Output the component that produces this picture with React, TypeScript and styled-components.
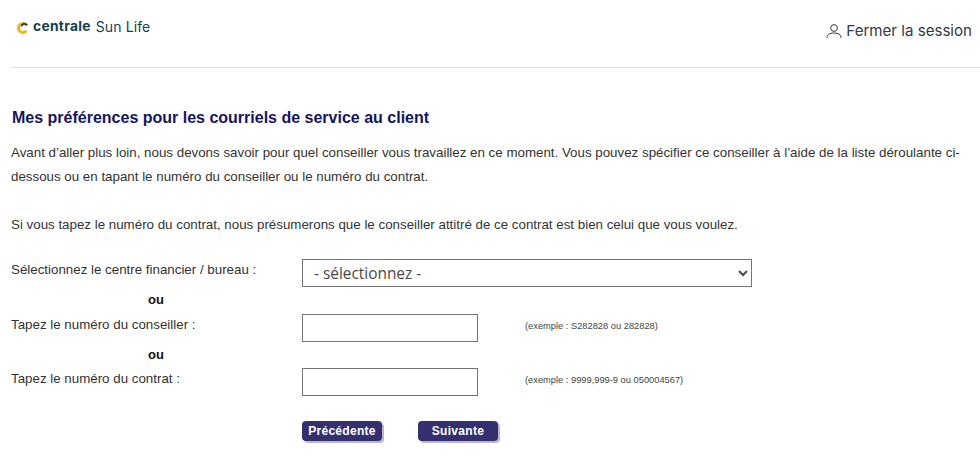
import React from "react";
import styled, { createGlobalStyle } from "styled-components";

const Global = createGlobalStyle`
  html, body { margin: 0; padding: 0; background: #fff; }
  body { font-family: "Liberation Sans", Arial, sans-serif; color: #2b2b2b; }
`;
const Page = styled.div`
  width: 980px;
  height: 467px;
  overflow: hidden;
  padding-left: 11px;
  box-sizing: border-box;
`;
const Header = styled.header`
  height: 67px;
  border-bottom: 1px solid #e1e1e1;
  display: flex;
  justify-content: space-between;
  align-items: flex-start;
`;
const Logo = styled.div`
  display: flex;
  align-items: center;
  gap: 4px;
  margin: 16px 0 0 6px;
  height: 20px;
  color: #173f4a;
`;
const LogoMark = styled.svg`
  margin-top: 4px;
`;
const LogoBold = styled.b`
  font-family: Inter, sans-serif;
  font-weight: 700;
  font-size: 13.8px;
  letter-spacing: 0.3px;
`;
const LogoLight = styled.span`
  font-family: Inter, sans-serif;
  font-weight: 400;
  font-size: 14px;
  letter-spacing: 0.1px;
  margin-left: 1px;
`;
const Logout = styled.div`
  display: flex;
  align-items: center;
  gap: 4px;
  margin: 21px 8px 0 0;
  font-family: Inter, sans-serif;
  font-size: 15.1px;
  line-height: 20px;
  color: #333a42;
`;
const Title = styled.h1`
  margin: 40px 0 0 1px;
  font-size: 16px;
  line-height: 20px;
  font-weight: 700;
  color: #15155f;
`;
const Para = styled.p`
  margin: 13px 10px 0 0;
  font-size: 13.33px;
  line-height: 24px;
  color: #333;
`;
const ParaNext = styled(Para)`
  margin-top: 24px;
`;
const Form = styled.div`
  margin-top: 22px;
  display: flex;
  flex-direction: column;
  font-size: 13.33px;
  color: #333;
`;
const Row = styled.div<{ $h: number }>`
  display: grid;
  grid-template-columns: 291px 176px 1fr;
  height: ${(p) => p.$h}px;
  align-items: flex-start;
`;
const Label = styled.label<{ $top: number }>`
  padding-top: ${(p) => p.$top}px;
  line-height: 14px;
`;
const Or = styled.div`
  font-size: 13px;
  font-weight: 700;
  color: #111;
  line-height: 14px;
  padding: 1px 0 0 137px;
`;
const Select = styled.select`
  grid-column: 2 / 4;
  width: 450px;
  height: 28px;
  box-sizing: border-box;
  border: 1px solid #767676;
  border-radius: 0;
  background: #fff;
  font-family: "Open Sans", sans-serif;
  font-size: 15.4px;
  color: #4a4a4a;
  padding-left: 7px;
`;
const Input = styled.input<{ $top: number }>`
  width: 176px;
  height: 28px;
  margin-top: ${(p) => p.$top}px;
  box-sizing: border-box;
  border: 1px solid #767676;
  border-radius: 0;
  background: #fff;
`;
const Hint = styled.span<{ $top: number }>`
  font-size: 9.3px;
  line-height: 12px;
  color: #444;
  padding: ${(p) => p.$top}px 0 0 47px;
`;
const Buttons = styled.div`
  display: flex;
  gap: 36px;
  margin: 0 0 0 291px;
`;
const Btn = styled.button<{ $w: number }>`
  width: ${(p) => p.$w}px;
  height: 20px;
  padding: 0;
  border: 0;
  border-radius: 4px;
  background: #34306f;
  box-shadow: 2px 2px 0 #b9b7d0;
  color: #fff;
  font-family: "Liberation Sans", Arial, sans-serif;
  font-size: 12px;
  font-weight: 700;
  letter-spacing: 0.3px;
`;

const CLogo = () => (
  <LogoMark width="12" height="12" viewBox="0 0 12 12" fill="none">
    <path d="M9.450 3.100A4.500 4.500 0 1 0 9.450 8.900" stroke="#f0b323" strokeWidth="3" />
    <path d="M10.300 3.400A3.200 3.200 0 0 0 4.400 4.300" stroke="#173f4a" strokeWidth="1.800" />
  </LogoMark>
);
const UserIcon = () => (
  <svg width="16" height="16" viewBox="0 0 16 16" fill="none" stroke="#333a42" strokeWidth="1">
    <circle cx="8" cy="5" r="3.4" />
    <path d="M1 15c0-3.4 2.6-5 7-5s7 1.600 7 5" />
  </svg>
);

export default function App() {
  return (
    <>
      <Global />
      <Page>
        <Header>
          <Logo>
            <CLogo />
            <LogoBold>centrale</LogoBold>
            <LogoLight>Sun Life</LogoLight>
          </Logo>
          <Logout>
            <UserIcon />
            Fermer la session
          </Logout>
        </Header>
        <Title>Mes préférences pour les courriels de service au client</Title>
        <Para>
          Avant d’aller plus loin, nous devons savoir pour quel conseiller vous travaillez en ce moment. Vous pouvez
          spécifier ce conseiller à l’aide de la liste déroulante ci-dessous ou en tapant le numéro du conseiller ou le
          numéro du contrat.
        </Para>
        <ParaNext>
          Si vous tapez le numéro du contrat, nous présumerons que le conseiller attitré de ce contrat est bien celui que
          vous voulez.
        </ParaNext>
        <Form>
          <Row $h={33}>
            <Label $top={4}>Sélectionnez le centre financier / bureau :</Label>
            <Select defaultValue="">
              <option value="">- sélectionnez -</option>
            </Select>
          </Row>
          <Or>ou</Or>
          <Row $h={40}>
            <Label $top={11}>Tapez le numéro du conseiller :</Label>
            <Input $top={7} />
            <Hint $top={13}>(exemple : S282828 ou 282828)</Hint>
          </Row>
          <Or>ou</Or>
          <Row $h={59}>
            <Label $top={10}>Tapez le numéro du contrat :</Label>
            <Input $top={6} />
            <Hint $top={12}>(exemple : 9999,999-9 ou 050004567)</Hint>
          </Row>
          <Buttons>
            <Btn $w={80}>Précédente</Btn>
            <Btn $w={80}>Suivante</Btn>
          </Buttons>
        </Form>
      </Page>
    </>
  );
}
